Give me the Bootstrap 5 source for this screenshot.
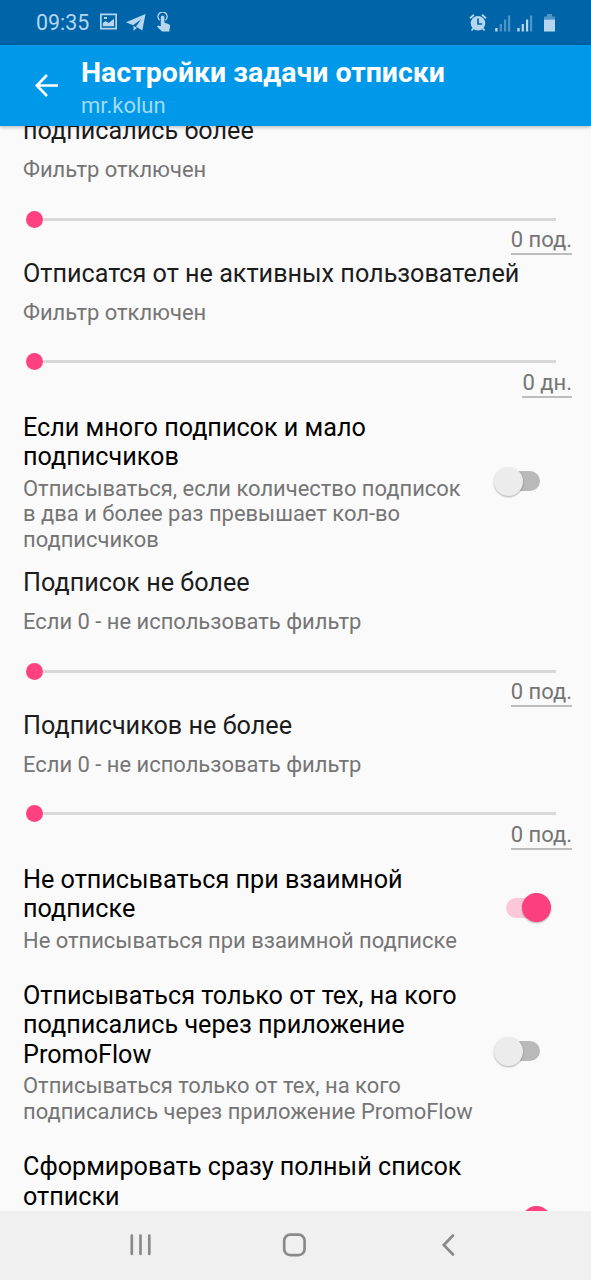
<!DOCTYPE html>
<html lang="ru">
<head>
<meta charset="utf-8">
<meta name="viewport" content="width=device-width, initial-scale=1">
<title>Настройки задачи отписки</title>
<link href="https://cdn.jsdelivr.net/npm/bootstrap@5.3.0/dist/css/bootstrap.min.css" rel="stylesheet">
<style>
body{font-family:Roboto,"Noto Sans",sans-serif;background:#fafafa;height:1280px;white-space:nowrap}
.status-bar{height:45px;background:#0064a8;color:#b5d6ee;padding:2px 34px 0 36px;font-size:21.4px}
.app-bar{height:81px;background:#0099e9;padding-left:34px;box-shadow:0 1px 4px rgba(0,0,0,.3);z-index:2}
.app-title{font-size:28.5px;font-weight:700;line-height:32px;color:#fff}
.app-sub{font-size:22px;line-height:26px;color:#a3dbfa}
.prefs{height:1085px;color:#000}
.pref-slider{height:142.2px;padding-left:23px;padding-right:19px;color:#1c1c1c}
.pref-slider:first-child{margin-top:-9.6px}
.pref-title{font-size:25.2px;line-height:29.7px}
.pref-slider .pref-title{line-height:30px}
.pref-note{font-size:21.95px;line-height:25.8px;color:#757575}
.pref-slider .pref-note{margin-top:11px;line-height:26px}
.seek{height:16px;margin:28px 16px 0 3px}
.seek-thumb{width:17px;height:17px;background:#ff4081}
.seek-line{height:3px;background:#d8d8d8}
.seek-value{font-size:22px;line-height:26px;color:#757575;border-bottom:2px solid #bdbdbd}
.pref-switch{padding:12px 40px 15.3px 23px}
.pref-switch .pref-note{margin-top:3.5px}
.last-row{min-height:140px}
.toggle{width:57px;height:29px;padding:0 11px 0 12px;margin-bottom:3px}
.toggle-track{height:20px;border-radius:10px;background:#b9b9b9}
.toggle-thumb{width:29px;height:29px;top:0;left:0;background:#ececec;box-shadow:0 1px 2px rgba(0,0,0,.3)}
.toggle.on .toggle-track{background:#fbc8da}
.toggle.on .toggle-thumb{left:28px;background:#fb3f7f}
.nav-keys{height:69px;background:#f0f0f0}
</style>
</head>
<body class="overflow-hidden d-flex flex-column">
<div class="status-bar d-flex align-items-center justify-content-between">
  <div class="d-flex align-items-center">
    <span id="clock">09:35</span>
    <svg class="ms-2" width="80" height="22" viewBox="97 12.5 80 22" fill="#b5d6ee">
      <path fill-rule="evenodd" d="M100 14h17v16h-17zM101.7 15.7v12.6h13.6V15.7zM102.8 26.8v-3.3l2.8-2 3 2 5.4-4.3v7.6zM104 17.5h3v2h-3z"/>
      <path d="M126 22.8 145.5 14.5 142.3 31 136 27 141.2 19.8 133 25.8z"/><path d="m133.5 26.3 3.5 2.3-3.5 2.7z"/>
      <path d="M160.8 17.8a1.8 1.8 0 0 1 3.6 0V23l5 2q.8.5.7 1.6l-.8 5.4h-7.3l-5-4.8 1.2-1.3 2.6.8z"/>
      <path d="M159.7 20.7a4.6 4.6 0 1 1 5.7 0" fill="none" stroke="#b5d6ee" stroke-width="1.3"/>
    </svg>
  </div>
  <svg width="90" height="22" viewBox="467 12.5 90 22" fill="#b5d6ee">
    <circle cx="478" cy="22.8" r="7.3"/><path d="M478 18V23.5h4.2" fill="none" stroke="#0064a8" stroke-width="1.7"/>
    <path d="m470 17.7 4-3.5M486 17.7l-4-3.5M473.7 27.5l-2.2 2.5M482.3 27.5l2.2 2.5" stroke="#b5d6ee" stroke-width="1.8"/>
    <path d="M495.2 27.5h2.4V31h-2.4zM517.3 27.5h2.4V31h-2.4zM521.7 23.5h2.2V31h-2.2zM526 19h2.2v12H526z"/>
    <path opacity=".43" d="M499.7 23.5h2.2V31h-2.2zM504 19h2.2v12H504zM508 15h2.2v16H508zM530 15h2.2v16H530zM547 13.5h5V16h3v3h-11v-3h3z"/>
    <path d="M544 19h11v12h-11z"/>
  </svg>
</div>
<header class="app-bar d-flex position-relative">
  <svg class="flex-shrink-0" width="26" height="26" viewBox="0 0 26 26" style="margin-top:27px" fill="none" stroke="#fff" stroke-width="2.6"><path d="M24 13.5H3M13 3 2.8 13.5 13 24"/></svg>
  <div style="padding:12px 0 0 21px"><div class="app-title">Настройки задачи отписки</div><div class="app-sub" style="margin-top:4px">mr.kolun</div></div>
</header>
<main class="prefs overflow-hidden flex-shrink-0">
  <section class="pref-slider d-flex flex-column">
    <div class="pref-title">подписались более</div><div class="pref-note">Фильтр отключен</div>
    <div class="seek d-flex align-items-center"><span class="seek-thumb rounded-circle flex-shrink-0"></span><span class="seek-line flex-grow-1"></span></div>
    <div class="seek-value align-self-end">0 под.</div>
  </section>
  <section class="pref-slider d-flex flex-column">
    <div class="pref-title">Отписатся от не активных пользователей</div><div class="pref-note">Фильтр отключен</div>
    <div class="seek d-flex align-items-center"><span class="seek-thumb rounded-circle flex-shrink-0"></span><span class="seek-line flex-grow-1"></span></div>
    <div class="seek-value align-self-end">0 дн.</div>
  </section>
  <section class="pref-switch d-flex align-items-center justify-content-between">
    <div><div class="pref-title">Если много подписок и мало<br>подписчиков</div><div class="pref-note">Отписываться, если количество подписок<br>в два и более раз превышает кол-во<br>подписчиков</div></div>
    <div class="toggle position-relative d-flex align-items-center"><span class="toggle-track w-100"></span><span class="toggle-thumb rounded-circle position-absolute"></span></div>
  </section>
  <section class="pref-slider d-flex flex-column">
    <div class="pref-title">Подписок не более</div><div class="pref-note">Если 0 - не использовать фильтр</div>
    <div class="seek d-flex align-items-center"><span class="seek-thumb rounded-circle flex-shrink-0"></span><span class="seek-line flex-grow-1"></span></div>
    <div class="seek-value align-self-end">0 под.</div>
  </section>
  <section class="pref-slider d-flex flex-column">
    <div class="pref-title">Подписчиков не более</div><div class="pref-note">Если 0 - не использовать фильтр</div>
    <div class="seek d-flex align-items-center"><span class="seek-thumb rounded-circle flex-shrink-0"></span><span class="seek-line flex-grow-1"></span></div>
    <div class="seek-value align-self-end">0 под.</div>
  </section>
  <section class="pref-switch d-flex align-items-center justify-content-between">
    <div><div class="pref-title">Не отписываться при взаимной<br>подписке</div><div class="pref-note">Не отписываться при взаимной подписке</div></div>
    <div class="toggle on position-relative d-flex align-items-center"><span class="toggle-track w-100"></span><span class="toggle-thumb rounded-circle position-absolute"></span></div>
  </section>
  <section class="pref-switch d-flex align-items-center justify-content-between">
    <div><div class="pref-title">Отписываться только от тех, на кого<br>подписались через приложение<br>PromoFlow</div><div class="pref-note">Отписываться только от тех, на кого<br>подписались через приложение PromoFlow</div></div>
    <div class="toggle position-relative d-flex align-items-center"><span class="toggle-track w-100"></span><span class="toggle-thumb rounded-circle position-absolute"></span></div>
  </section>
  <section class="pref-switch d-flex align-items-center justify-content-between">
    <div class="last-row"><div class="pref-title">Сформировать сразу полный список<br>отписки</div></div>
    <div class="toggle on position-relative d-flex align-items-center"><span class="toggle-track w-100"></span><span class="toggle-thumb rounded-circle position-absolute"></span></div>
  </section>
</main>
<footer class="nav-keys flex-shrink-0">
  <svg width="591" height="69" viewBox="0 1211 591 69" fill="none" stroke="#8a8a8a" stroke-width="2.7" stroke-linecap="round">
    <path d="M131.8 1235.5v18.5M140.5 1235.5v18.5M149.3 1235.5v18.5"/>
    <rect x="284.2" y="1234.7" width="20.4" height="20.4" rx="6"/>
    <path d="m453 1235.5-9.2 9.5 9.2 9.5"/>
  </svg>
</footer>
<script src="https://cdn.jsdelivr.net/npm/bootstrap@5.3.0/dist/js/bootstrap.bundle.min.js"></script>
</body>
</html>
